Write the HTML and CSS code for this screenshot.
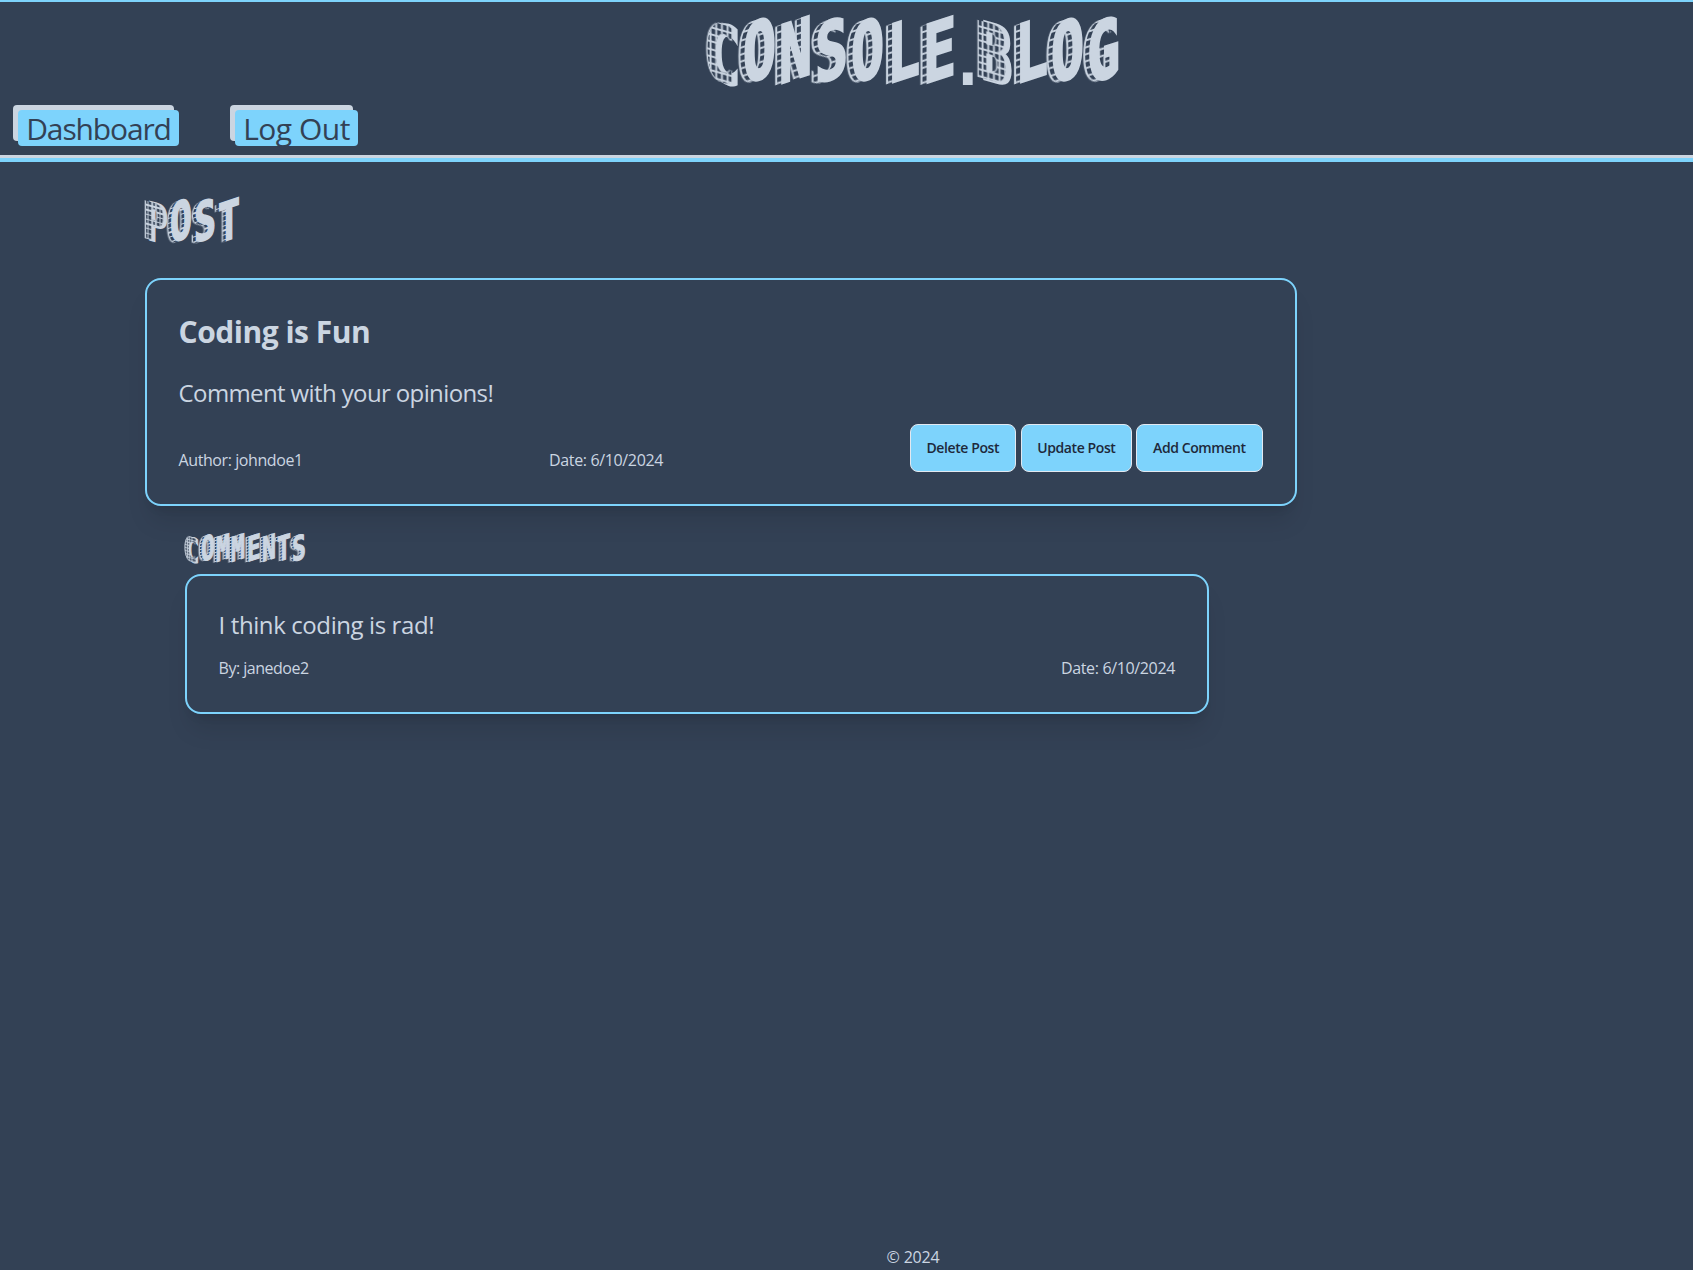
FILE: index.html
```html
<!DOCTYPE html>
<html lang="en">
<head>
<meta charset="utf-8">
<title>Console.Blog</title>
<link rel="stylesheet" href="styles.css">
</head>
<body>
<header class="site-header">
  <h1 class="block-text site-title"><span class="wide" data-c="C">C</span><span data-c="O">O</span><span data-c="N">N</span><span data-c="S">S</span><span data-c="O">O</span><span data-c="L">L</span><span data-c="E">E</span><span class="dot">.</span><span class="wide" data-c="B">B</span><span data-c="L">L</span><span data-c="O">O</span><span data-c="G">G</span></h1>
  <nav class="nav"><a class="nav-link dashboard"><span>Dashboard</span></a><a class="nav-link logout"><span>Log Out</span></a></nav>
</header>
<main>
  <h2 class="block-text page-title"><span class="wide" data-c="P">P</span><span data-c="O">O</span><span data-c="S">S</span><span data-c="T">T</span></h2>
  <article class="card post">
    <h3 class="post-title"><span>Coding is Fun</span></h3>
    <p class="body-text opinions"><span>Comment with your opinions!</span></p>
    <div class="post-meta">
      <p class="meta author"><span>Author: johndoe1</span></p>
      <p class="meta date"><span>Date: 6/10/2024</span></p>
      <div class="actions"><button class="btn delete">Delete Post</button><button class="btn update">Update Post</button><button class="btn add">Add Comment</button></div>
    </div>
  </article>
  <section class="comments">
    <h2 class="block-text comments-title"><span class="wide" data-c="C">C</span><span data-c="O">O</span><span data-c="M">M</span><span data-c="M">M</span><span data-c="E">E</span><span data-c="N">N</span><span data-c="T">T</span><span data-c="S">S</span></h2>
    <article class="card comment">
      <p class="body-text"><span>I think coding is rad!</span></p>
      <div class="comment-meta"><p class="meta byline"><span>By: janedoe2</span></p><p class="meta"><span>Date: 6/10/2024</span></p></div>
    </article>
  </section>
</main>
<footer class="footer"><span>© 2024</span></footer>
</body>
</html>
```
FILE: styles.css
```css
:root {
  --slate: #334155;
  --light: #cbd5e1;
  --sky: #7dd3fc;
}
* { box-sizing: border-box; }
body {
  margin: 0;
  height: 1270px;
  display: flex;
  flex-direction: column;
  overflow: hidden;
  background: var(--slate);
  color: var(--light);
  font-family: "Open Sans", "Noto Sans", sans-serif;
}
h1, h2, h3, p { margin: 0; }

.site-header {
  height: 162px;
  border-top: 2px solid var(--sky);
  border-bottom: 4px solid var(--sky);
  box-shadow: inset 0 -3px 0 var(--light);
}

/* Isometric block lettering */
.block-text {
  display: flex;
  font-family: "DejaVu Sans Mono", monospace;
  font-weight: 700;
  line-height: 1;
}
.block-text span {
  position: relative;
  z-index: 0;
  width: .439em;
  height: 1em;
  transform-origin: 0 86%;
  transform: matrix(.67, -.22, 0, .97, 1, -1);
  -webkit-text-stroke: .035em var(--light);
}
.block-text span::before {
  content: attr(data-c);
  position: absolute;
  z-index: -1;
  top: 0;
  left: -.09em;
  width: .602em;
  color: transparent;
  -webkit-text-stroke: 0;
  background: repeating-linear-gradient(var(--light) 0 .025em, var(--slate) .025em .09em);
  -webkit-background-clip: text;
  background-clip: text;
  filter: drop-shadow(-.03em 0 var(--light));
}
/* Letters turned the other way show their gridded face in front */
.block-text .wide { transform: matrix(.64, .18, 0, .96, 3, -7); }
.block-text .wide::before {
  z-index: 1;
  left: -.1em;
  background:
    repeating-linear-gradient(90deg, var(--light) 0 .035em, transparent .035em .11em),
    repeating-linear-gradient(var(--light) 0 .025em, var(--slate) .025em .09em);
  -webkit-background-clip: text;
  background-clip: text;
  filter: drop-shadow(-.02em 0 var(--light)) drop-shadow(.02em 0 var(--light));
}
.block-text .dot {
  width: .24em;
  transform: matrix(.6, 0, 0, .72, -5, -1);
}
.block-text .dot::before { content: none; }

.site-title {
  height: 104px;
  padding: 14px 0 0 706px;
  font-size: 82px;
}

.nav { display: flex; gap: 56px; padding: 4px 18px; }
.nav-link {
  display: flex;
  justify-content: center;
  height: 36px;
  border-radius: 4px;
  background: var(--sky);
  box-shadow: -5px -5px 0 var(--light);
  color: var(--slate);
  font-size: 30px;
  line-height: 37px;
  white-space: nowrap;
}
.dashboard { width: 161px; letter-spacing: -1.15px; }
.logout { width: 123px; letter-spacing: -.5px; }

main { flex: 1; padding: 36px 0 0 145px; }
.page-title { height: 80px; font-size: 54.6px; }
.page-title .wide { transform: matrix(.64, .18, 0, .96, 2, -5); }

.card {
  border: 2px solid var(--sky);
  border-radius: 16px;
  padding: 32px 31.6px;
  box-shadow: 0 20px 25px -5px rgb(0 0 0 / .1), 0 8px 10px -6px rgb(0 0 0 / .1);
}
.post { width: 1152px; height: 228px; }
.post-title { height: 64px; padding-top: 2px; font-size: 30px; line-height: 36px; letter-spacing: -.5px; }
.body-text { padding-top: 1px; font-size: 24px; line-height: 32px; letter-spacing: -.4px; }
.opinions { letter-spacing: -.62px; }
.post-meta { display: flex; height: 48px; margin-top: 15px; }
.meta { font-size: 16px; line-height: 24px; letter-spacing: -.35px; }
.post-meta .meta { padding-top: 24px; }
.author { width: 370.4px; }
.post .author { letter-spacing: -.42px; }
.byline { letter-spacing: -.5px; }
.actions { display: flex; margin-left: auto; margin-right: .6px; }
.btn {
  height: 48px;
  padding: 0 0 1px;
  border: 1px solid #e2e8f0;
  border-radius: 8px;
  background: var(--sky);
  color: #1e293b;
  font: 600 14px "Open Sans", sans-serif;
  letter-spacing: -.4px;
}
.delete { width: 106px; margin-right: 5px; }
.update { width: 111px; margin-right: 4px; }
.add { width: 127px; }

.comments { padding: 28px 0 0 40px; }
.comments-title { height: 40px; font-size: 34.5px; }
.comments-title .wide { transform: matrix(.64, .18, 0, .96, 1, -3); }
.comment { width: 1024px; height: 140px; }
.comment-meta { display: flex; justify-content: space-between; margin-top: 15px; padding-right: .4px; }

.footer { text-align: center; height: 25px; font-size: 16px; line-height: 24px; letter-spacing: -.2px; padding-left: 133px; }
```
